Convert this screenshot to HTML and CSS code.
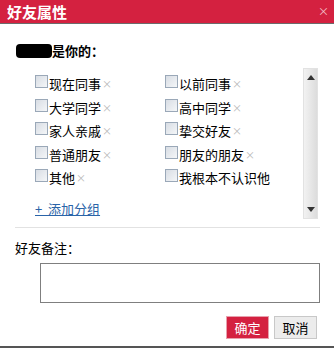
FILE: index.html
```html
<!DOCTYPE html>
<html lang="zh">
<head>
    <meta charset="UTF-8">
    <title>好友属性</title>
    <link rel="stylesheet" href="styles.css">
</head>
<body>
    <div class="dialog">
        <div class="title-bar">
            <span class="title">好友属性</span>
            <span class="close">×</span>
        </div>

        <div class="body">
            <p class="question"><span class="name-mask"></span>是你的：</p>

            <div class="group-box">
                <ul class="group-list">
                    <li><span class="box"></span>现在同事<span class="del">×</span></li>
                    <li><span class="box"></span>以前同事<span class="del">×</span></li>
                    <li><span class="box"></span>大学同学<span class="del">×</span></li>
                    <li><span class="box"></span>高中同学<span class="del">×</span></li>
                    <li><span class="box"></span>家人亲戚<span class="del">×</span></li>
                    <li><span class="box"></span>挚交好友<span class="del">×</span></li>
                    <li><span class="box"></span>普通朋友<span class="del">×</span></li>
                    <li><span class="box"></span>朋友的朋友<span class="del">×</span></li>
                    <li><span class="box"></span>其他<span class="del">×</span></li>
                    <li><span class="box"></span>我根本不认识他</li>
                </ul>
                <a class="add-group" href="#">+&nbsp;&nbsp;添加分组</a>
                <div class="scrollbar">
                    <span class="arrow up"></span>
                    <span class="arrow down"></span>
                </div>
            </div>

            <div class="divider"></div>

            <p class="remark-label">好友备注：</p>
            <div class="remark-box"></div>

            <div class="actions">
                <button class="btn ok">确定</button>
                <button class="btn cancel">取消</button>
            </div>
        </div>
    </div>
</body>
</html>
```

FILE: styles.css
```css
body {
    margin: 0;
    font-family: "Noto Sans CJK SC", "Liberation Sans", sans-serif;
    font-size: 13px;
    line-height: 17px;
    color: #000;
    background: #fff;
}
.dialog {
    width: 334px;
    height: 348px;
    box-sizing: border-box;
    border-bottom: 2px solid #555;
    background: #fff;
}
.title-bar {
    height: 23px;
    background: #d42140;
    border-bottom: 1px solid #6b6b6b;
    display: flex;
    align-items: center;
    justify-content: space-between;
    padding: 0 5px 0 7px;
}
.title {
    color: #fff;
    font-size: 15px;
    font-weight: bold;
}
.close {
    color: #f3c2cb;
    font-size: 11px;
}
.body {
    padding: 19px 14px 0 15px;
}
.question {
    margin: 0 0 0 1px;
    height: 15px;
    line-height: 15px;
    font-weight: bold;
    display: flex;
    align-items: center;
}
.name-mask {
    display: inline-block;
    width: 36px;
    height: 14px;
    background: #000;
    border-radius: 4px;
}
.group-box {
    position: relative;
    margin-top: 10px;
}
.group-list {
    list-style: none;
    margin: 0;
    padding: 7px 0 0 20px;
    display: grid;
    grid-template-columns: 130px 140px;
    row-gap: 6.5px;
}
.group-list li {
    display: flex;
    align-items: center;
    height: 17px;
}
.box {
    width: 11px;
    height: 11px;
    border: 1px solid #9aa8b8;
    background: linear-gradient(135deg, #d8dde4, #f4f6f8);
    margin-right: 1px;
    margin-top: -4px;
}
.del {
    color: #b8b8b8;
    font-size: 10px;
    margin-left: 1px;
}
.add-group {
    display: inline-block;
    margin: 14px 0 0 20px;
    color: #2a64a8;
    font-size: 13px;
    text-decoration: underline;
}
.scrollbar {
    position: absolute;
    right: 2px;
    top: 0;
    width: 15px;
    height: 151px;
    background: linear-gradient(90deg, #f2f2f2, #dcdcdc);
    border: 1px solid #e2e2e2;
    box-sizing: border-box;
}
.arrow {
    position: absolute;
    left: 3px;
    width: 0;
    height: 0;
    border-left: 4px solid transparent;
    border-right: 4px solid transparent;
}
.arrow.up {
    top: 6px;
    border-bottom: 5px solid #333;
}
.arrow.down {
    bottom: 6px;
    border-top: 5px solid #333;
}
.divider {
    height: 1px;
    background: #e2e2e2;
    margin-top: 10px;
}
.remark-label {
    margin: 11px 0 0 0;
    height: 17px;
}
.remark-box {
    margin: 7px 0 0 25px;
    height: 38px;
    border: 1px solid #7f7f7f;
}
.actions {
    display: flex;
    justify-content: flex-end;
    gap: 5px;
    margin-top: 13px;
    padding-right: 3px;
}
.btn {
    width: 43px;
    height: 23px;
    font-family: inherit;
    font-size: 13px;
    line-height: 17px;
    border: 1px solid;
    padding: 0;
    cursor: pointer;
}
.ok {
    background: #d42140;
    border-color: #e8a0ad;
    color: #fff;
}
.cancel {
    background: #ececec;
    border-color: #c8c8c8;
    color: #000;
}
```
